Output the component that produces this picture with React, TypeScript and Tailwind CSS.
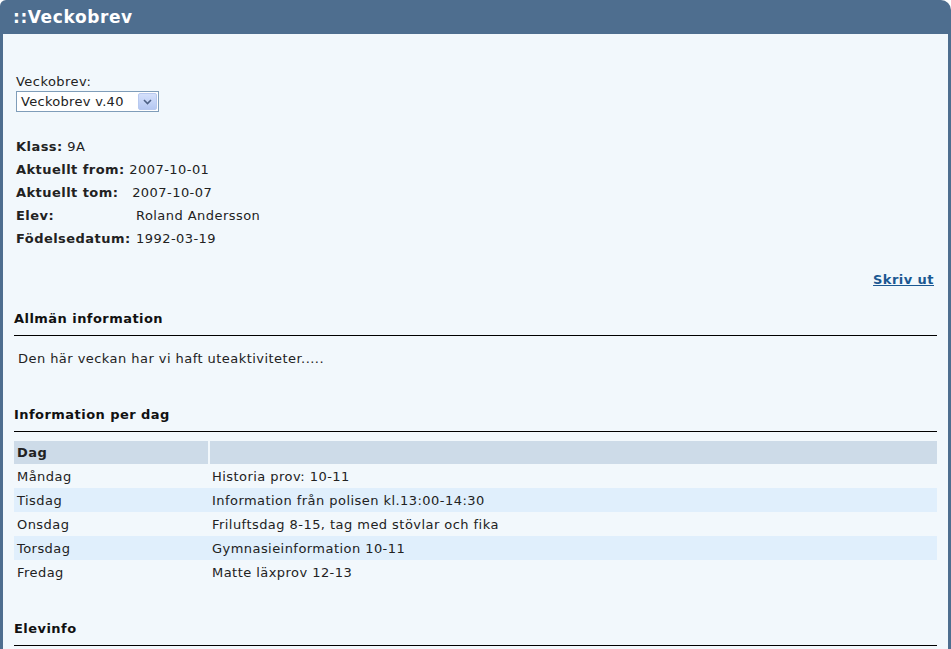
import React from "react";

const days = [
  { day: "Måndag", info: "Historia prov: 10-11" },
  { day: "Tisdag", info: "Information från polisen kl.13:00-14:30" },
  { day: "Onsdag", info: "Friluftsdag 8-15, tag med stövlar och fika" },
  { day: "Torsdag", info: "Gymnasieinformation 10-11" },
  { day: "Fredag", info: "Matte läxprov 12-13" },
];

function SectionHeading({ children }: { children: React.ReactNode }) {
  return (
    <div className="border-b border-black pb-[8px]">
      <h2 className="text-[13px] font-bold leading-[17px] text-[#111]">{children}</h2>
    </div>
  );
}

export default function App() {
  return (
    <div
      className="w-[951px] h-[649px] overflow-hidden bg-[#4e6e8f] rounded-tr-[10px] rounded-tl-[6px] flex flex-col text-[#222] tracking-[0.45px]"
      style={{ fontFamily: '"DejaVu Sans", Verdana, sans-serif' }}
    >
      {/* title bar */}
      <div className="h-[34px] shrink-0 flex items-center px-[13px]">
        <h1 className="text-[17px] font-bold text-white leading-none tracking-[0.6px]">::Veckobrev</h1>
      </div>

      {/* content */}
      <div className="flex-1 mx-[3px] bg-[#f2f8fc] px-[11px] pt-[40px] text-[13px] leading-[16px]">
        {/* letter picker */}
        <div className="pl-[2px]">
          <label className="block">Veckobrev:</label>
          <div className="mt-[1px] flex w-[143px] h-[21px] border border-[#7f9db9] bg-white">
            <span className="flex-1 pl-[4px] leading-[19px] tracking-[0.3px]">Veckobrev v.40</span>
            <span className="w-[19px] m-[1px] flex items-center justify-center rounded-[2px] bg-gradient-to-b from-[#d4e0fb] to-[#b5c8f2] border border-[#b8c9ef]">
              <svg width="9" height="6" viewBox="0 0 9 6">
                <path d="M1 1 L4.5 4.5 L8 1" fill="none" stroke="#4d6185" strokeWidth="1.6" />
              </svg>
            </span>
          </div>
        </div>

        {/* student details */}
        <div className="pl-[2px] mt-[27px] flex flex-col gap-[7px]">
          <div>
            <b>Klass:</b> 9A
          </div>
          <div>
            <b>Aktuellt from:</b> 2007-10-01
          </div>
          <div>
            <b>Aktuellt tom:</b>&nbsp;&nbsp; 2007-10-07
          </div>
          <div className="flex">
            <b className="w-[120px]">Elev:</b>
            <span>Roland Andersson</span>
          </div>
          <div className="flex">
            <b className="w-[120px]">Födelsedatum:</b>
            <span>1992-03-19</span>
          </div>
        </div>

        <div className="flex justify-end mt-[25px] pr-[3px]">
          <a href="#" className="font-bold text-[#1b5892] underline">
            Skriv ut
          </a>
        </div>

        <div className="mt-[22px]">
          <SectionHeading>Allmän information</SectionHeading>
          <p className="mt-[15px] pl-[4px]">Den här veckan har vi haft uteaktiviteter.....</p>
        </div>

        <div className="mt-[39px]">
          <SectionHeading>Information per dag</SectionHeading>
          <table className="mt-[9px] w-full border-collapse">
            <thead>
              <tr className="bg-[#cddbe8] h-[23px]">
                <th className="w-[195px] text-left font-bold pl-[3px] pt-[1px] border-r-2 border-[#f2f8fc]">Dag</th>
                <th></th>
              </tr>
            </thead>
            <tbody>
              {days.map((d, i) => (
                <tr key={d.day} className={`h-[24px] ${i % 2 === 1 ? "bg-[#e0effc]" : ""}`}>
                  <td className="pl-[3px] pt-[2px]">{d.day}</td>
                  <td className="pl-[3px] pt-[2px]">{d.info}</td>
                </tr>
              ))}
            </tbody>
          </table>
        </div>

        <div className="mt-[36px]">
          <SectionHeading>Elevinfo</SectionHeading>
        </div>
      </div>
    </div>
  );
}
